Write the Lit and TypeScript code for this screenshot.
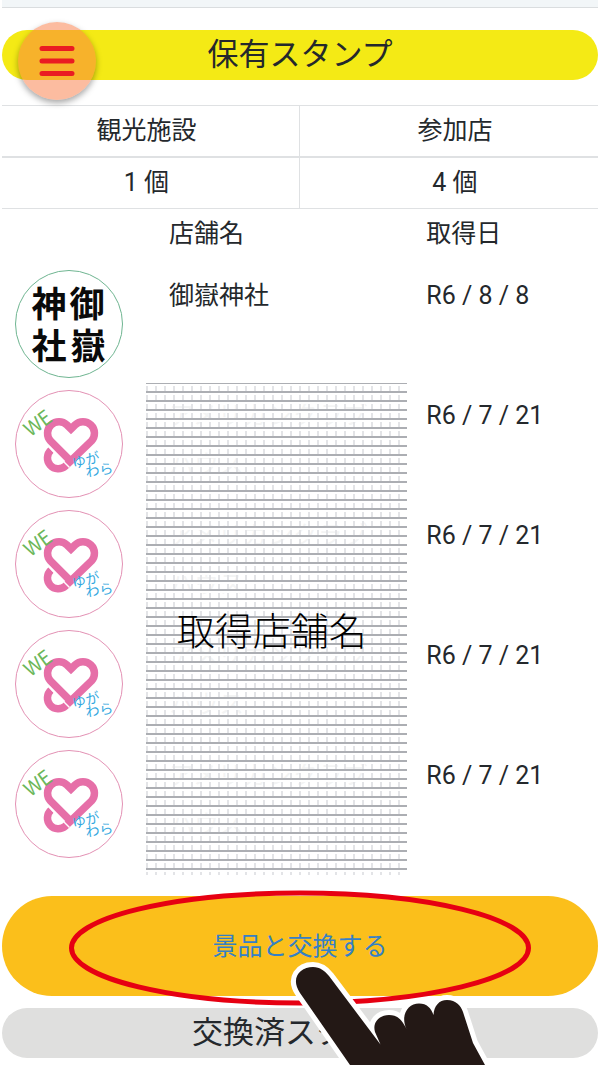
import { LitElement, html, css } from "lit";
import { customElement } from "lit/decorators.js";

interface Stamp {
  kind: "shrine" | "shop";
  name: string;
  date: string;
}

const SHOP_NAME = "アメリカンクラブハウス";

const STAMPS: Stamp[] = [
  { kind: "shrine", name: "御嶽神社", date: "R6 / 8 / 8" },
  { kind: "shop", name: SHOP_NAME, date: "R6 / 7 / 21" },
  { kind: "shop", name: SHOP_NAME, date: "R6 / 7 / 21" },
  { kind: "shop", name: SHOP_NAME, date: "R6 / 7 / 21" },
  { kind: "shop", name: SHOP_NAME, date: "R6 / 7 / 21" },
];

@customElement("stamp-mark")
export class StampMark extends LitElement {
  static properties = { kind: { type: String } };
  declare kind: string;

  static styles = css`
    :host { display: block; width: 108px; height: 108px; }
    .mark { display: block; width: 100%; height: 100%; font-family: "Noto Sans CJK JP", sans-serif; text-anchor: middle; }
    .ring { fill: none; stroke-width: 1; }
    .green { stroke: #6fb591; }
    .pink { stroke: #e391b4; }
    .kanji { font-size: 35px; font-weight: 700; fill: #0a0a0a; }
    .heart { fill: none; stroke: #e66fa8; stroke-width: 7.5; }
    .gap { fill: none; stroke: #fff; stroke-width: 1.5; }
    .we { font-size: 20px; font-weight: 400; fill: #6cb75a; }
    .kana { font-size: 14px; fill: #35a9df; }
  `;

  render() {
    if (this.kind === "shrine") {
      return html`<svg class="mark" viewBox="0 0 108 108" role="img" aria-label="御嶽神社">
        <circle class="ring green" cx="54" cy="54" r="53.5" />
        <g class="kanji">
          <text x="34" y="47">神</text><text x="72" y="47">御</text>
          <text x="34" y="89">社</text><text x="73" y="89">嶽</text>
        </g>
      </svg>`;
    }
    return html`<svg class="mark" viewBox="0 0 108 108" role="img" aria-label="WE ゆがわら">
      <circle class="ring pink" cx="54" cy="54" r="53.5" />
      <path class="heart" d="M36 60 A10.500 10.500 0 0 0 50.500 76 L76.500 51 A11.500 11.500 0 0 0 60 35 L56 39 L52 35 A11.500 11.500 0 0 0 35.500 51 L56.500 72" />
      <path class="gap" d="M31.500 54.500 L54.500 77.500" />
      <text class="we" transform="translate(27 39) rotate(-36)">WE</text>
      <g class="kana">
        <text transform="translate(72 75) rotate(-14)">ゆが</text>
        <text transform="translate(85 85) rotate(-8)">わら</text>
      </g>
    </svg>`;
  }
}

@customElement("app-root")
export class AppRoot extends LitElement {
  static styles = css`
    :host {
      display: block;
      position: relative;
      overflow: hidden;
      background: #fff;
      color: #24282c;
      font-family: Roboto, "Noto Sans CJK JP", sans-serif;
      font-size: 25px;
      line-height: 49px;
    }
    .page { padding: 0 2px 7px; }
    .strip { height: 7px; background: #f2f6f8; border-bottom: 1px solid #dadddf; }
    .bar {
      margin: 0;
      height: 50px;
      line-height: 50px;
      border-radius: 25px;
      text-align: center;
      font-size: 31px;
      font-weight: 400;
    }
    .owned { margin-top: 22px; background: #f4ea15; }
    .used { margin-top: 12px; background: #dfdfde; }
    .menu {
      position: absolute;
      left: 18px;
      top: 22px;
      width: 78px;
      height: 78px;
      padding: 0;
      border: 0;
      border-radius: 50%;
      background: rgba(250, 122, 66, 0.5);
      box-shadow: 0 3px 6px rgba(0, 0, 0, 0.35);
      display: grid;
      place-items: center;
    }
    .bars { width: 36px; height: 32px; stroke: #ea1b22; stroke-width: 5; stroke-linecap: round; }
    table { width: 100%; border-collapse: separate; border-spacing: 0; table-layout: fixed; }
    th, td { font-weight: 400; padding: 0; }
    .totals { margin-top: 25px; line-height: 50px; }
    .totals th, .totals td { text-align: center; padding-right: 8px; border: 0 solid #dfe1e3; border-bottom-width: 1px; }
    .totals th { border-top-width: 1px; border-bottom-width: 2px; }
    .totals th:first-child, .totals td:first-child { border-right-width: 1px; }
    .totals th:last-child, .totals td:last-child { padding: 0 0 0 12px; }
    .list { position: relative; }
    .list th { text-align: left; padding-bottom: 6px; }
    .list td { text-align: left; vertical-align: top; padding: 7px 0 6px; }
    .list .pic { padding: 6px 0 6px 13px; }
    .list .shop { padding-right: 58px; }
    .c1 { width: 28%; }
    .c2 { width: 43.2%; }
    .cover {
      position: absolute;
      left: 144px;
      right: 32%;
      top: 174px;
      bottom: -11px;
      display: grid;
      place-items: center;
      background-color: rgba(255, 255, 255, 0.95);
      background-image:
        linear-gradient(#acaeb3 2px, #fff 2px, #fff 4px, transparent 4px),
        linear-gradient(90deg, #e3e4e7 2px, transparent 2px);
      background-size: 9px 9px;
      background-position: 0 -1px;
      color: #000;
      font-family: "Noto Sans CJK JP", sans-serif;
      font-size: 38px;
      font-weight: 300;
    }
    .cover span { padding: 0 10px 2px 0; }
    .action { position: relative; margin-top: 32px; }
    .trade {
      display: block;
      width: 100%;
      height: 100px;
      padding: 0;
      border: 0;
      border-radius: 50px;
      background: #fbbf1b;
      color: #3580c6;
      font: inherit;
    }
    .ellipse { position: absolute; left: 50%; top: -6px; width: 464px; height: 116px; margin-left: -232px; fill: none; stroke: #e60012; stroke-width: 5; pointer-events: none; }
    .hand { position: absolute; left: 50%; top: 64px; width: 210px; height: 105px; margin-left: -20px; fill: #231815; pointer-events: none; }
    .halo { fill: #fff; stroke: #fff; stroke-width: 10; stroke-linejoin: round; }
  `;

  render() {
    const hand =
      "M350 1065 L300 993 C290 978 300 967 313 967 C320 967 325 971 329 976 L380.500 1044.500 L375 1032 C372 1022 380 1015 389 1015 C398 1015 402 1020 406.500 1029 C400 1015 408 1003.500 419 1003.500 C427 1003.500 431 1008 433.500 1015 C434 1006 439 1000 447 1000 C456 1000 461 1006 463 1012 L473 1043 L485 1065 L490 1075 L357 1075 Z";
    return html`
      <div class="page">
        <div class="strip"></div>
        <h1 class="bar owned">保有スタンプ</h1>
        <table class="totals">
          <thead><tr><th scope="col">観光施設</th><th scope="col">参加店</th></tr></thead>
          <tbody><tr><td>1 個</td><td>4 個</td></tr></tbody>
        </table>
        <div class="list">
          <table>
            <colgroup><col class="c1" /><col class="c2" /><col /></colgroup>
            <thead><tr><th></th><th scope="col">店舗名</th><th scope="col">取得日</th></tr></thead>
            <tbody>
              ${STAMPS.map(
                (s) => html`<tr>
                  <td class="pic"><stamp-mark .kind=${s.kind}></stamp-mark></td>
                  <td class="shop">${s.name}</td>
                  <td>${s.date}</td>
                </tr>`
              )}
            </tbody>
          </table>
          <div class="cover"><span>取得店舗名</span></div>
        </div>
        <div class="action">
          <button class="trade" type="button">景品と交換する</button>
          <svg class="ellipse" viewBox="0 0 464 116" aria-hidden="true"><ellipse cx="232" cy="58" rx="228.500" ry="55" /></svg>
          <svg class="hand" viewBox="280 960 210 105" aria-hidden="true">
            <path class="halo" d=${hand} /><path d=${hand} />
          </svg>
        </div>
        <h2 class="bar used">交換済スタンプ</h2>
      </div>
      <button class="menu" type="button" aria-label="メニュー">
        <svg class="bars" viewBox="0 0 36 32" aria-hidden="true"><path d="M3 3.500H33M3 16H33M3 28.500H33" /></svg>
      </button>
    `;
  }
}
